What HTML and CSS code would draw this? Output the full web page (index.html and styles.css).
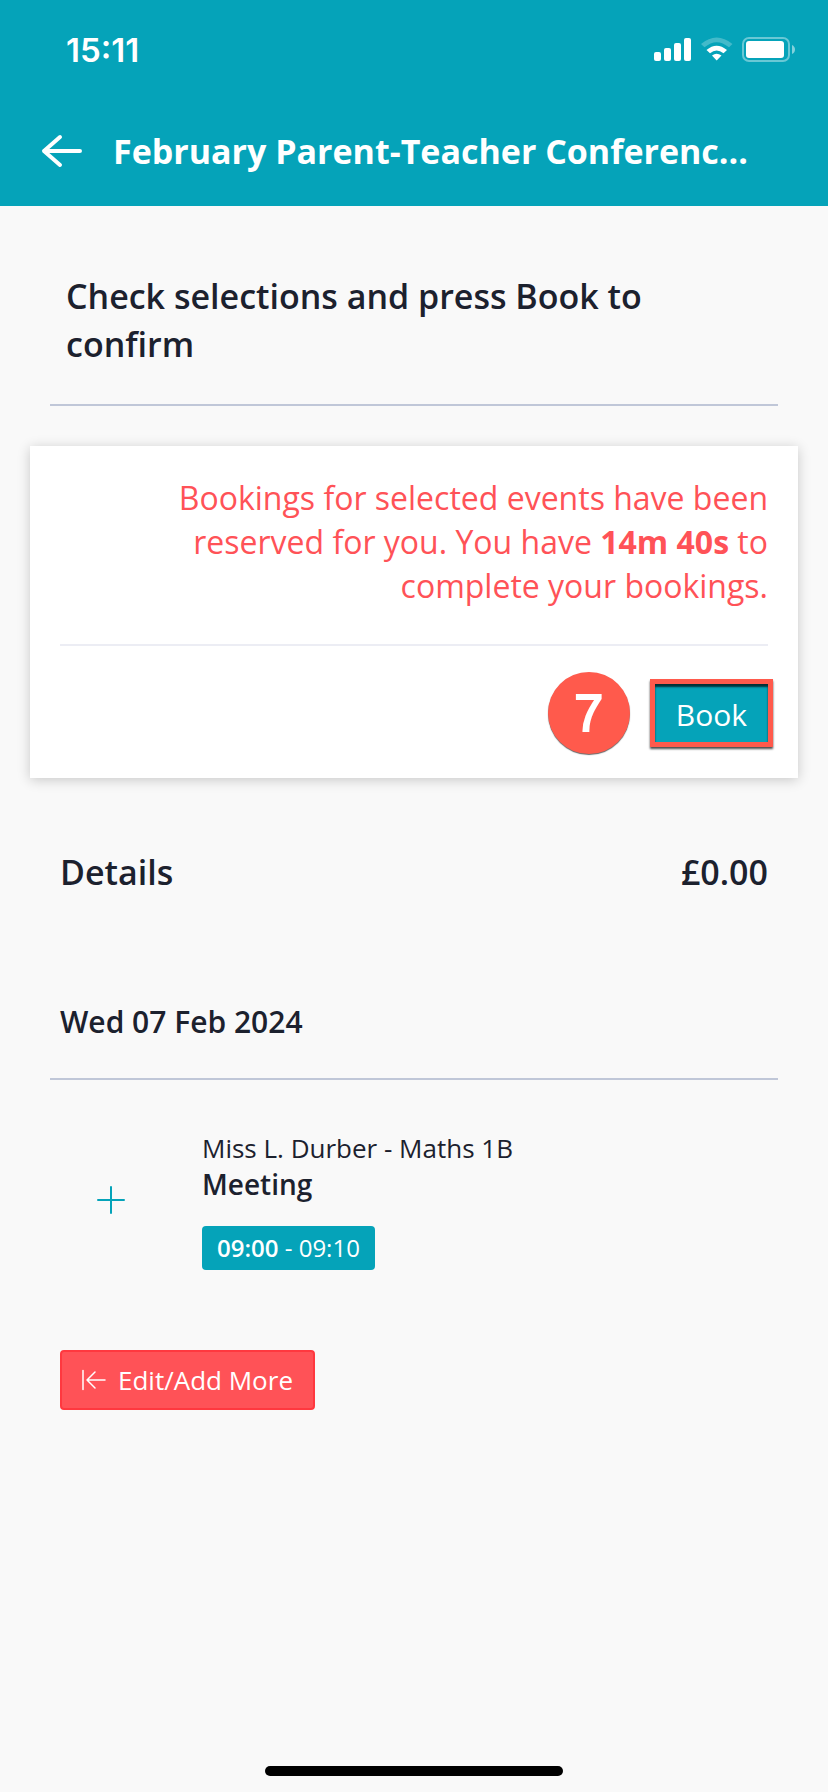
FILE: index.html
```html
<!DOCTYPE html>
<html lang="en">
<head>
<meta charset="UTF-8">
<meta name="viewport" content="width=device-width, initial-scale=1.0">
<title>February Parent-Teacher Conferenc...</title>
<link rel="stylesheet" href="styles.css">
</head>
<body>

<header class="header">
  <div class="status-bar">
    <span class="status-time">15:11</span>
    <svg class="status-icons" width="142" height="26" viewBox="0 0 142 26" fill="#fff" aria-hidden="true">
      <!-- signal -->
      <rect x="0" y="15" width="7" height="9" rx="2"/>
      <rect x="10" y="11" width="7" height="13" rx="2"/>
      <rect x="20" y="6" width="7" height="18" rx="2"/>
      <rect x="30" y="1" width="7" height="23" rx="2"/>
      <!-- wifi -->
      <path d="M47 7Q62.500-6 78.500 7L75 10.300Q62.500 0 50.500 10.300Z" opacity="0.250"/>
      <path d="M52.500 13Q62.500 4.500 73 13L69.500 16.300Q62.500 10.500 56 16.300Z"/>
      <path d="M58 18.500Q62.500 15 67.500 18.500L62.700 23.500Z"/>
      <!-- battery -->
      <rect x="89" y="1" width="46" height="23" rx="6" fill="none" stroke="#fff" stroke-width="2" opacity="0.400"/>
      <rect x="92" y="4" width="38" height="17" rx="3"/>
      <path d="M138 8Q141 9.500 141 12.500Q141 15.500 138 17Z" opacity="0.500"/>
    </svg>
  </div>
  <div class="nav-bar">
    <button class="back-btn" type="button" aria-label="Back">
      <svg width="42" height="34" viewBox="0 0 42 34" fill="none" stroke="#fff" stroke-width="4" stroke-linecap="round" stroke-linejoin="round">
        <path d="M39 17H3M19 3L3 17L19 31"/>
      </svg>
    </button>
    <h1 class="nav-title">February Parent-Teacher Conferenc...</h1>
  </div>
</header>

<main class="content">
  <h2 class="intro">Check selections and press Book to confirm</h2>

  <section class="card">
    <p class="card-message">Bookings for selected events have been reserved for you. You have <strong>14m 40s</strong> to complete your bookings.</p>
    <div class="card-actions">
      <span class="step">7</span>
      <button class="book-btn" type="button">Book</button>
    </div>
  </section>

  <div class="summary">
    <h2>Details</h2>
    <span class="total">£0.00</span>
  </div>

  <h3 class="date">Wed 07 Feb 2024</h3>

  <div class="booking">
    <button class="expand-btn" type="button" aria-label="Expand">
      <svg width="28" height="28" viewBox="0 0 28 28" fill="none" stroke="#05a3b9" stroke-width="2" stroke-linecap="round">
        <path d="M14 1V27M1 14H27"/>
      </svg>
    </button>
    <div class="booking-info">
      <div class="booking-name">Miss L. Durber - Maths 1B</div>
      <div class="booking-type">Meeting</div>
      <div class="booking-time"><strong>09:00</strong> - 09:10</div>
    </div>
  </div>

  <button class="edit-btn" type="button">
    <svg width="24" height="22" viewBox="0 0 24 22" fill="none" stroke="#fff" stroke-width="1.500" stroke-linecap="round" stroke-linejoin="round">
      <path d="M1 1.500V20.500M23 11H5M13 3L5 11L13 19"/>
    </svg>
    Edit/Add More
  </button>
</main>

<div class="home-indicator"></div>

</body>
</html>
```

FILE: styles.css
```css
* {
  margin: 0;
  padding: 0;
  box-sizing: border-box;
}

body {
  display: flex;
  flex-direction: column;
  min-height: 100vh;
  background: #f9f9f9;
  color: #1c212e;
  font-family: 'Open Sans', 'Noto Sans', sans-serif;
}

button {
  border: none;
  background: none;
  font-family: inherit;
  cursor: pointer;
}

svg {
  display: block;
}

.header {
  background: #05a3b9;
  color: #fff;
}

.status-bar {
  display: flex;
  justify-content: space-between;
  align-items: center;
  height: 98px;
  padding: 2px 32px 0 66px;
}

.status-time {
  font-family: Inter, sans-serif;
  font-size: 33px;
  font-weight: 600;
}

.nav-bar {
  display: flex;
  align-items: center;
  gap: 30px;
  height: 108px;
  padding: 0 40px 2px 41px;
}

.nav-title {
  font-size: 34px;
  font-weight: 700;
  line-height: 48px;
  white-space: nowrap;
}

.content {
  padding: 0 30px;
}

.intro {
  margin: 0 20px 40px;
  padding: 66px 16px 36px;
  border-bottom: 2px solid #c0c7d8;
  font-size: 34px;
  font-weight: 600;
  line-height: 48px;
}

.card {
  padding: 30px 30px 24px;
  background: #fff;
  box-shadow: 0 2px 12px rgba(0, 0, 0, 0.2);
}

.card-message {
  padding: 0 0 36px 100px;
  border-bottom: 2px solid #ecedf4;
  color: #ff5257;
  font-size: 32px;
  line-height: 44px;
  text-align: right;
}

.card-actions {
  display: flex;
  justify-content: flex-end;
  align-items: center;
  gap: 20px;
  margin-right: -5px;
  padding-top: 26px;
}

.step {
  display: flex;
  justify-content: center;
  align-items: center;
  width: 82px;
  height: 82px;
  border-radius: 50%;
  background: #ff5a4c;
  box-shadow: 0 1px 1px rgba(0, 0, 0, 0.6);
  color: #fff;
  font-family: 'Liberation Sans', sans-serif;
  font-size: 52px;
  -webkit-text-stroke: 2px #fff;
}

.book-btn {
  height: 68px;
  padding: 2px 21px 0;
  border: 5px solid #ff5a4c;
  background: #05a3b9;
  box-shadow: 0 2px 2px rgba(0, 0, 0, 0.7), inset 0 3px 2px rgba(0, 0, 0, 0.7);
  color: #fff;
  font-size: 30px;
}

.summary {
  display: flex;
  justify-content: space-between;
  padding: 70px 30px 0;
  font-size: 34px;
  font-weight: 600;
  line-height: 48px;
}

.summary h2 {
  font-size: inherit;
  font-weight: inherit;
}

.date {
  margin: 0 20px;
  padding: 102px 10px 32px;
  border-bottom: 2px solid #c0c7d8;
  font-size: 30px;
  font-weight: 600;
  line-height: 48px;
}

.booking {
  display: flex;
  align-items: center;
  gap: 48px;
  padding: 50px 30px 80px;
}

.expand-btn {
  display: flex;
  justify-content: center;
  width: 94px;
  padding: 0 0 0 8px;
}

.booking-info {
  line-height: 36px;
}

.booking-name {
  font-size: 26px;
}

.booking-type {
  font-size: 28px;
  font-weight: 600;
}

.booking-time {
  display: inline-block;
  margin-top: 24px;
  padding: 4px 15px;
  border-radius: 4px;
  background: #05a3b9;
  color: #fff;
  font-size: 24px;
}

.booking-time strong {
  font-weight: 600;
}

.edit-btn {
  display: flex;
  align-items: center;
  gap: 12px;
  height: 60px;
  margin-left: 30px;
  padding: 0 20px;
  border: 2px solid #ff383f;
  border-radius: 4px;
  background: #ff5257;
  color: #fff;
  font-size: 26px;
}

.home-indicator {
  width: 36%;
  height: 10px;
  margin: auto auto 16px;
  border-radius: 5px;
  background: #000;
}
```
